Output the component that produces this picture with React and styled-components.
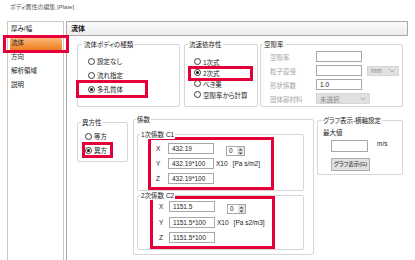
import React from 'react';
import styled, { createGlobalStyle, css } from 'styled-components';

const RED = '#e5003a';

const Global = createGlobalStyle`
  html, body { margin: 0; padding: 0; background: #fff; }
  body {
    font-family: "Liberation Sans", "Noto Sans CJK JP", sans-serif;
    font-size: 6.5px;
    color: #1a1a1a;
    font-feature-settings: "palt";
  }
  #root { width: 415px; height: 260px; overflow: hidden; }
  * { box-sizing: border-box; }
`;

const markCss = css`
  ${(p) =>
    p.$mark &&
    css`
      position: relative;
      &::after {
        content: '';
        position: absolute;
        inset: ${p.$mark};
        border: 3px solid ${RED};
        pointer-events: none;
      }
    `}
`;

const Page = styled.div`
  width: 415px;
  height: 260px;
  display: flex;
  flex-direction: column;
  overflow: hidden;
  background: #fff;
`;

const TitleBar = styled.div`
  height: 21px;
  padding-left: 10px;
  line-height: 14px;
  font-size: 6px;
  color: #555;
`;

const Main = styled.div`
  flex: 1;
  display: flex;
  padding-left: 7px;
`;

const List = styled.ul`
  margin: 0;
  padding: 0;
  list-style: none;
  width: 57px;
  border: 1px solid #c9c9c9;
  border-bottom: none;
`;

const ListItem = styled.li`
  height: 14px;
  line-height: 14px;
  padding-left: 3px;
  color: #222;
  ${(p) =>
    p.$selected &&
    css`
      margin: 0 1px 0 2px;
      padding-left: 1px;
      background: linear-gradient(#fcc48f, #f59a4a 55%, #ee7f22);
    `}
  ${markCss}
`;

const Right = styled.div`
  width: 342px;
  margin-left: 2px;
  display: flex;
  flex-direction: column;
`;

const Header = styled.div`
  height: 15px;
  border: 1px solid #a9a9a9;
  background: linear-gradient(#fbfbfb, #ececec);
  font-weight: bold;
  font-size: 7px;
  line-height: 13px;
  padding-left: 4px;
  color: #111;
`;

const Body = styled.div`
  flex: 1;
  border-left: 1px solid #a9a9a9;
  padding: 8px 0 0 10px;
  display: flex;
  flex-direction: column;
`;

const Row = styled.div`
  display: flex;
  align-items: flex-start;
  margin-top: ${(p) => p.$mt || 0}px;
`;

const Group = styled.div`
  position: relative;
  flex: none;
  width: ${(p) => p.$w}px;
  height: ${(p) => p.$h}px;
  margin-top: ${(p) => p.$mt || 0}px;
  margin-right: ${(p) => p.$mr || 0}px;
  border: 1px solid #d6d6d6;
  border-radius: 2px;
  padding: ${(p) => p.$pad || '0'};
  display: flex;
  flex-direction: column;
  gap: ${(p) => p.$gap || 0}px;
`;

const Legend = styled.span`
  position: absolute;
  top: -5px;
  left: ${(p) => p.$left}px;
  padding: 0 1px;
  background: #fff;
  line-height: 9px;
  white-space: nowrap;
  color: #222;
`;

const RadioItem = styled.div`
  display: flex;
  align-items: center;
  height: ${(p) => p.$h}px;
  color: #1a1a1a;
  ${markCss}
`;

const Circle = styled.span`
  flex: none;
  width: 7px;
  height: 7px;
  border-radius: 50%;
  border: 1px solid #3a3a3a;
  background: #fff;
  margin-right: 2px;
  display: flex;
  align-items: center;
  justify-content: center;
  &::after {
    content: '';
    width: 3px;
    height: 3px;
    border-radius: 50%;
    background: ${(p) => (p.$on ? '#111' : 'transparent')};
  }
`;

const Radio = ({ label, on, h, mark }) => (
  <RadioItem $h={h} $mark={mark}>
    <Circle $on={on} />
    <span>{label}</span>
  </RadioItem>
);

const FieldRow = styled.div`
  display: flex;
  align-items: center;
  height: 11px;
`;

const Label = styled.span`
  flex: none;
  width: ${(p) => p.$w}px;
  color: ${(p) => (p.$dim ? '#a3a3a3' : '#1a1a1a')};
`;

const Input = styled.div`
  flex: none;
  width: ${(p) => p.$w}px;
  height: ${(p) => p.$h || 11}px;
  border: 1px solid #a8a8a8;
  background: #fff;
  padding-left: 3px;
  line-height: 9px;
  color: #222;
  white-space: nowrap;
  overflow: hidden;
`;

const Select = styled.div`
  flex: none;
  width: ${(p) => p.$w}px;
  height: ${(p) => p.$h}px;
  margin-left: ${(p) => p.$ml || 0}px;
  background: #e1e1e1;
  border: 1px solid #d6d6d6;
  color: #8a8a8a;
  display: flex;
  align-items: center;
  justify-content: space-between;
  padding: 0 3px 0 3px;
`;

const Chevron = () => (
  <svg width="6" height="4" viewBox="0 0 6 4">
    <polyline points="0.5,0.5 3,3 5.5,0.5" fill="none" stroke="#9a9a9a" strokeWidth="0.8" />
  </svg>
);

const CoefBox = styled.div`
  flex: none;
  width: ${(p) => p.$w}px;
  height: 53px;
  border: 3px solid ${RED};
  padding: ${(p) => p.$pad};
  display: flex;
  flex-direction: column;
  gap: ${(p) => p.$gap}px;
`;

const Spinner = styled.div`
  flex: none;
  align-self: flex-start;
  margin-top: 3px;
  margin-left: ${(p) => p.$ml}px;
  width: 19px;
  height: 10px;
  border: 1px solid #a8a8a8;
  display: flex;
  background: #fff;
`;

const SpinVal = styled.span`
  flex: 1;
  padding-left: 2px;
  line-height: 8px;
`;

const SpinBtns = styled.span`
  width: 7px;
  background: #e3e3e3;
  display: flex;
  align-items: center;
  justify-content: center;
`;

const Unit = styled.span`
  margin-left: ${(p) => p.$ml}px;
  white-space: nowrap;
  color: #222;
`;

const Text = styled.div`
  line-height: 9px;
  color: #222;
`;

const GraphRow = styled.div`
  display: flex;
  align-items: flex-start;
  margin: ${(p) => p.$m};
`;

const Button = styled.div`
  width: 39px;
  height: 13px;
  margin: 6px 0 0 8px;
  background: #e1e1e1;
  border: 1px solid #adadad;
  text-align: center;
  font-size: 5.6px;
  line-height: 11px;
  letter-spacing: -0.1px;
  color: #222;
  white-space: nowrap;
  overflow: hidden;
`;

const Spin = ({ ml }) => (
  <Spinner $ml={ml}>
    <SpinVal>0</SpinVal>
    <SpinBtns>
      <svg width="5" height="7" viewBox="0 0 5 7">
        <polygon points="2.5,0.5 4.5,2.5 0.5,2.5" fill="#444" />
        <polygon points="0.5,4.5 4.5,4.5 2.5,6.5" fill="#444" />
      </svg>
    </SpinBtns>
  </Spinner>
);

const Coef = ({ w, pad, gap, x, y, z, unit, lw }) => (
  <CoefBox $w={w} $pad={pad} $gap={gap}>
    <FieldRow>
      <Label $w={lw}>X</Label>
      <Input $w={46}>{x}</Input>
      <Spin ml={12} />
    </FieldRow>
    <FieldRow>
      <Label $w={lw}>Y</Label>
      <Input $w={46}>{y}</Input>
      <Unit $ml={2}>X10</Unit>
      <Unit $ml={5}>{unit}</Unit>
    </FieldRow>
    <FieldRow>
      <Label $w={lw}>Z</Label>
      <Input $w={46}>{z}</Input>
    </FieldRow>
  </CoefBox>
);

export default function App() {
  return (
    <Page>
      <Global />
      <TitleBar>ボディ属性の編集 [Plate]</TitleBar>
      <Main>
        <List>
          <ListItem>厚み/幅</ListItem>
          <ListItem $selected $mark="-1px -7px -3px -7px">流体</ListItem>
          <ListItem>方向</ListItem>
          <ListItem>解析領域</ListItem>
          <ListItem>説明</ListItem>
        </List>
        <Right>
          <Header>流体</Header>
          <Body>
            <Row>
              <Group $w={103} $h={63} $mr={4} $pad="9px 0 0 10px">
                <Legend $left={5}>流体ボディの種類</Legend>
                <Radio h={14} label="設定なし" />
                <Radio h={14} label="流れ指定" />
                <Radio h={14} label="多孔質体" on mark="-2px 31px -2px -12px" />
              </Group>
              <Group $w={74} $h={63} $mr={2} $pad="11px 0 0 9px">
                <Legend $left={3}>流速依存性</Legend>
                <Radio h={11} label="1次式" />
                <Radio h={11} label="2次式" on mark="-1px 4px -3px -6px" />
                <Radio h={11} label="べき乗" />
                <Radio h={11} label="空隙率から計算" />
              </Group>
              <Group $w={143} $h={63} $pad="6px 0 0 9px" $gap={3}>
                <Legend $left={2}>空隙率</Legend>
                <FieldRow>
                  <Label $w={46} $dim>空隙率</Label>
                  <Input $w={46} />
                </FieldRow>
                <FieldRow>
                  <Label $w={46} $dim>粒子直径</Label>
                  <Input $w={46} />
                  <Select $w={32} $h={10} $ml={5}>
                    <span>mm</span>
                    <Chevron />
                  </Select>
                </FieldRow>
                <FieldRow>
                  <Label $w={46} $dim>形状係数</Label>
                  <Input $w={46}>1.0</Input>
                </FieldRow>
                <FieldRow>
                  <Label $w={46} $dim>固体部材料</Label>
                  <Select $w={54} $h={11}>
                    <span>未選択</span>
                    <Chevron />
                  </Select>
                </FieldRow>
              </Group>
            </Row>
            <Row $mt={12}>
              <Group $w={51} $h={40} $mt={3} $mr={5} $pad="6px 0 0 7px">
                <Legend $left={3}>異方性</Legend>
                <Radio h={14} label="等方" />
                <Radio h={14} label="異方" on mark="-1px 14px -1px -3px" />
              </Group>
              <Group $w={181} $h={136} $mr={3} $pad="14px 0 0 3px" $gap={4}>
                <Legend $left={2}>係数</Legend>
                <Group $w={167} $h={57} $pad="2px 0 0 10px">
                  <Legend $left={2}>1次係数 C1</Legend>
                  <Coef
                    w={126}
                    pad="3px 0 0 5px"
                    gap={4}
                    lw={12}
                    x="432.19"
                    y="432.19*100"
                    z="432.19*100"
                    unit="[Pa s/m2]"
                  />
                </Group>
                <Group $w={167} $h={55} $pad="0 0 0 12px">
                  <Legend $left={2}>2次係数 C2</Legend>
                  <Coef
                    w={125}
                    pad="2px 0 0 6px"
                    gap={4.5}
                    lw={10}
                    x="1151.5"
                    y="1151.5*100"
                    z="1151.5*100"
                    unit="[Pa s2/m3]"
                  />
                </Group>
              </Group>
              <Group $w={86} $h={55} $mt={1} $pad="7px 0 0 5px">
                <Legend $left={4}>グラフ表示-横軸設定</Legend>
                <Text>最大値</Text>
                <GraphRow $m="3px 0 0 8px">
                  <Input $w={37} $h={12} />
                  <Unit $ml={9}>m/s</Unit>
                </GraphRow>
                <Button>グラフ表示(G)</Button>
              </Group>
            </Row>
          </Body>
        </Right>
      </Main>
    </Page>
  );
}
